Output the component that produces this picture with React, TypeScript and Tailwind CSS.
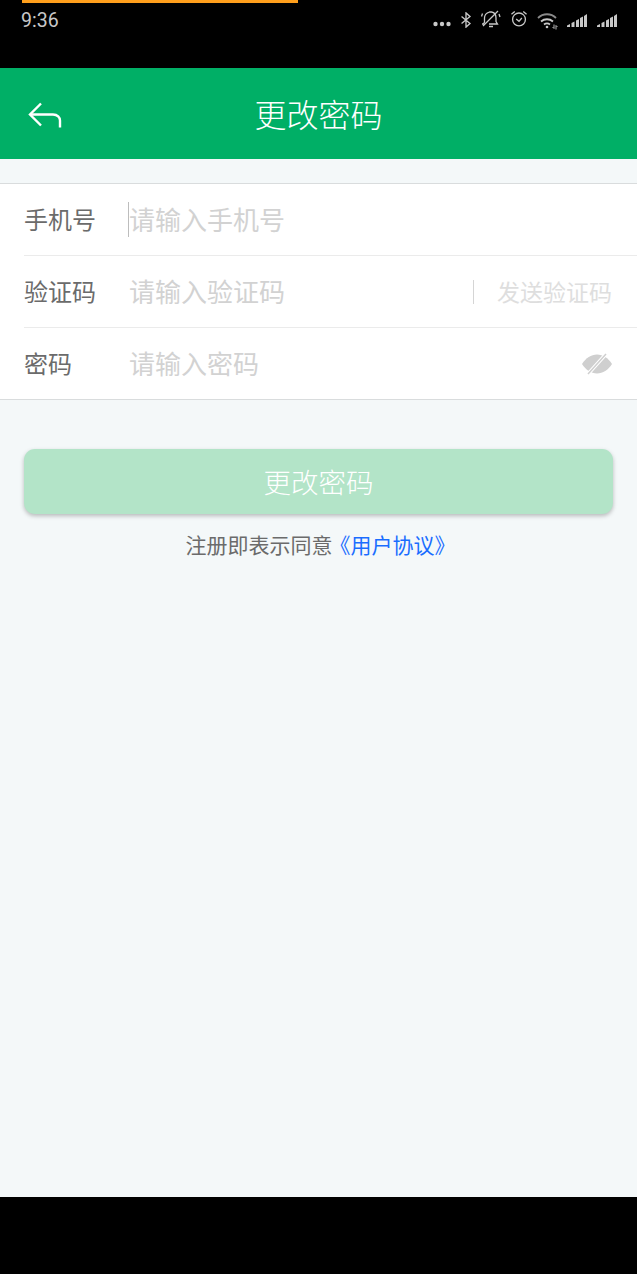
const cjk = "font-['Roboto','Noto_Sans_CJK_SC',sans-serif]";

function Dots() {
  return (
    <svg width="18" height="6" viewBox="0 0 18 6" fill="#c8c8c8">
      <circle cx="2.5" cy="3" r="2.2" />
      <circle cx="9" cy="3" r="2.2" />
      <circle cx="15.5" cy="3" r="2.2" />
    </svg>
  );
}

function Bluetooth() {
  return (
    <svg width="12" height="16" viewBox="0 0 12 18" fill="none" stroke="#c8c8c8" strokeWidth="1.5">
      <path d="M1 5l9.5 8L6 17V1l4.5 4L1 13" />
    </svg>
  );
}

function BellOff() {
  return (
    <svg width="20" height="18" viewBox="0 0 20 18" fill="none" stroke="#c8c8c8" strokeWidth="1.3">
      <path d="M1 14h1.5l1-2V8c0-3 2-5 5-6h2c3 .5 4.5 3 4.5 6v3.5l1.5 2.5H8" />
      <path d="M8 16.5h4M2 16L17 1M1.5 3.5L0.5 6.5M18 4l1 3" />
    </svg>
  );
}

function Alarm() {
  return (
    <svg width="18" height="17" viewBox="0 0 18 18" fill="none" stroke="#c8c8c8" strokeWidth="1.4">
      <circle cx="9" cy="10" r="6.8" />
      <path d="M6 9.5l3 2.5 3-3.5M1 4.5L4.5 1.5M17 4.5L13.5 1.5" />
    </svg>
  );
}

function Wifi() {
  return (
    <svg width="21" height="18" viewBox="0 0 21 18" fill="none" stroke="#c8c8c8">
      <path d="M1 6c5-5 13-5 18 0" strokeWidth="1.8" stroke="#8a8a8a" />
      <path d="M4 9.5c3.5-3 8.5-3 12 0M7 12.5c2-1.5 4-1.5 6 0" strokeWidth="1.8" />
      <circle cx="10" cy="15" r="1.3" fill="#c8c8c8" stroke="none" />
      <path d="M17 12.5v4l-1.5-1.5M19 17.5v-4l1.5 1.5" strokeWidth="0.9" />
    </svg>
  );
}

function Signal() {
  return (
    <svg width="20" height="14" viewBox="0 0 20 14" fill="#c8c8c8">
      <path d="M0 14v-1.5L3 11v3zM4.5 14v-4l3-1.5V14zM9 14V7.5l3-1.5v8zM13 14V5l3-1.5V14zM17 14V3l3-2v13z" />
    </svg>
  );
}

function BackArrow() {
  return (
    <svg width="34" height="26" viewBox="0 0 34 26" fill="none" stroke="#fff" strokeWidth="2.4">
      <path d="M13 1.5L2 12.5l11 11" />
      <path d="M2 12.5h23c4.500 0 7 3 7 6v7" />
    </svg>
  );
}

function EyeOff() {
  return (
    <svg width="32" height="22" viewBox="0 0 32 22">
      <path d="M1 11C5 5 10 1.5 16 1.5S27 5 31 11c-4 6-9 9.5-15 9.5S5 17 1 11z" fill="#cfcfcf" />
      <path d="M7 21L25 1" stroke="#fff" strokeWidth="3.5" />
      <path d="M7 21L25 1" stroke="#cfcfcf" strokeWidth="1.5" />
    </svg>
  );
}

function Row({ label, placeholder, caret, divider, children }: { label: string; placeholder: string; caret?: boolean; divider?: boolean; children?: React.ReactNode }) {
  return (
    <div className={`ml-6 pr-6 flex items-center ${divider ? "h-[72px] border-t border-[#ebebeb]" : "h-[71px]"}`}>
      <span className="w-[104px] pt-[3px] text-[24px] text-[#6b6b6b] leading-none">{label}</span>
      {caret ? <span className="w-px h-[35px] bg-[#bdbdbd]" /> : <span className="w-px" />}
      <span className="flex-1 pt-[3px] text-[26px] text-[#d2d2d2] leading-none">{placeholder}</span>
      {children}
    </div>
  );
}

export default function App() {
  return (
    <div className={`w-[637px] h-[1274px] flex flex-col bg-[#f4f8f9] ${cjk}`}>
      <div className="h-[68px] bg-black relative">
        <div className="absolute left-[22px] top-0 w-[276px] h-[3px] bg-[#ff9f1c]" />
        <div className="h-10 pl-[21px] pr-[20px] flex items-start justify-between pt-[10px]">
          <span className="text-[19.5px] leading-[21px] text-[#c8c8c8]">9:36</span>
          <div className="flex items-start gap-[9px]">
            <span className="pt-[11px]"><Dots /></span>
            <span className="pt-[2px]"><Bluetooth /></span>
            <BellOff />
            <Alarm />
            <span className="pt-[2px]"><Wifi /></span>
            <span className="pt-[3px] flex gap-[10px]">
              <Signal />
              <Signal />
            </span>
          </div>
        </div>
      </div>

      <div className="h-[91px] bg-[#00af66] flex items-center justify-center relative">
        <span className="absolute left-[28px] top-[34px]"><BackArrow /></span>
        <span className="pt-[5px] text-[32px] text-white font-light leading-none">更改密码</span>
      </div>

      <div className="mt-6 bg-white border-y border-[#d9dcdd]">
        <Row label="手机号" placeholder="请输入手机号" caret />
        <Row label="验证码" placeholder="请输入验证码" divider>
          <span className="h-6 w-px bg-[#d5d5d5] mr-[23px]" />
          <span className="pt-[3px] mr-px text-[23px] text-[#dedede] leading-none">发送验证码</span>
        </Row>
        <Row label="密码" placeholder="请输入密码" divider>
          <EyeOff />
        </Row>
      </div>

      <div className="mt-[49px] mx-6 h-[65px] pt-[5px] rounded-[11px] bg-[#b3e4c8] shadow-[0_2px_4px_rgba(0,0,0,0.25)] flex items-center justify-center text-[27.5px] font-light leading-none text-white">
        更改密码
      </div>
      <p className="mt-[19px] pl-1 text-center text-[21px] leading-[26px] text-[#6b6b6b]">
        注册即表示同意<span className="-ml-[3px] text-[#1a6dff]">《用户协议》</span>
      </p>

      <div className="flex-1" />
      <div className="h-[77px] bg-black" />
    </div>
  );
}
